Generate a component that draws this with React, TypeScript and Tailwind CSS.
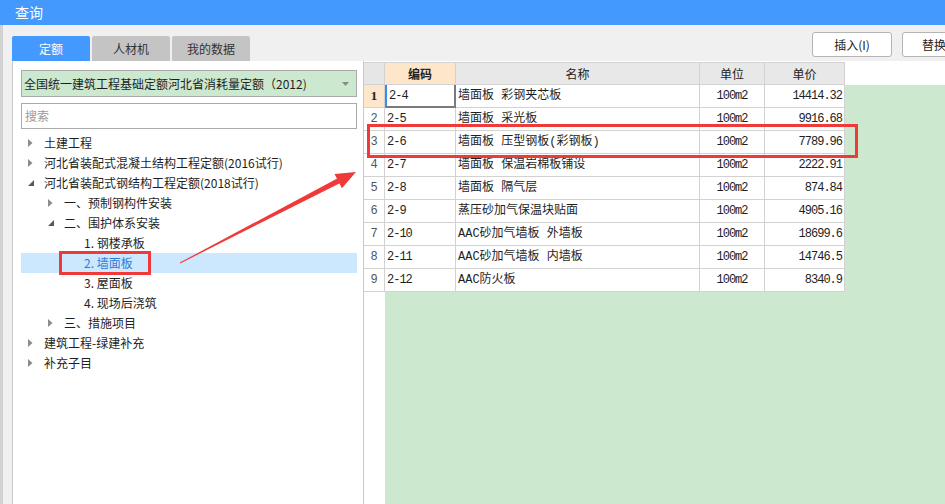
import React from 'react';

type TreeItem = { label: string; level: number; state?: 'open' | 'closed'; selected?: boolean };

const treeItems: TreeItem[] = [
  { label: '土建工程', level: 0, state: 'closed' },
  { label: '河北省装配式混凝土结构工程定额(2016试行)', level: 0, state: 'closed' },
  { label: '河北省装配式钢结构工程定额(2018试行)', level: 0, state: 'open' },
  { label: '一、预制钢构件安装', level: 1, state: 'closed' },
  { label: '二、围护体系安装', level: 1, state: 'open' },
  { label: '1. 钢楼承板', level: 2 },
  { label: '2. 墙面板', level: 2, selected: true },
  { label: '3. 屋面板', level: 2 },
  { label: '4. 现场后浇筑', level: 2 },
  { label: '三、措施项目', level: 1, state: 'closed' },
  { label: '建筑工程-绿建补充', level: 0, state: 'closed' },
  { label: '补充子目', level: 0, state: 'closed' },
];

const rows = [
  ['2-4', '墙面板 彩钢夹芯板', '14414.32'],
  ['2-5', '墙面板 采光板', '9916.68'],
  ['2-6', '墙面板 压型钢板(彩钢板)', '7789.96'],
  ['2-7', '墙面板 保温岩棉板铺设', '2222.91'],
  ['2-8', '墙面板 隔气层', '874.84'],
  ['2-9', '蒸压砂加气保温块贴面', '4905.16'],
  ['2-10', 'AAC砂加气墙板 外墙板', '18699.6'],
  ['2-11', 'AAC砂加气墙板 内墙板', '14746.5'],
  ['2-12', 'AAC防火板', '8340.9'],
];

// indentation per tree level
const levelPad = ['pl-[7px]', 'pl-[27px]', 'pl-[47px]'];

const Toggle = ({ state }: { state?: 'open' | 'closed' }) => {
  if (state === 'closed') {
    return (
      <svg width="5" height="8" viewBox="0 0 5 8">
        <path d="M0 0 L4.5 4 L0 8 Z" fill="#8c8c8c" />
      </svg>
    );
  }
  if (state === 'open') {
    return (
      <svg width="6" height="6" viewBox="0 0 6 6">
        <path d="M6 0 L6 6 L0 6 Z" fill="#595959" />
      </svg>
    );
  }
  return null;
};

const App = () => {
  return (
    <div className="relative w-[945px] h-[504px] overflow-hidden flex flex-col bg-[#f0f0f0] font-['Noto_Sans_CJK_SC',sans-serif] text-[#1e1e1e]">
      {/* title bar */}
      <div className="h-[25px] shrink-0 bg-[#4499ff] text-white text-[14px] pl-[15px] flex items-center">查询</div>

      <div className="flex flex-1 min-h-0">
        <div className="w-[3px] shrink-0 bg-[#d2d2d2]" />
        <div className="flex-1 flex flex-col pl-[9px] min-w-0">
          {/* tabs + buttons */}
          <div className="h-[36px] shrink-0 flex">
            <div className="flex items-end gap-[2px] text-[12px]">
              <div className="w-[78px] h-[25px] rounded-t-[2px] bg-[#4499ff] text-white flex items-center justify-center">定额</div>
              <div className="w-[78px] h-[25px] rounded-t-[2px] bg-[#c4c4c4] text-[#333] flex items-center justify-center">人材机</div>
              <div className="w-[78px] h-[25px] rounded-t-[2px] bg-[#c4c4c4] text-[#333] flex items-center justify-center">我的数据</div>
            </div>
            <div className="ml-auto mr-[-21px] mt-[7px] flex gap-[10px] text-[12px]">
              <button className="w-[80px] h-[25px] bg-white border border-[#b4b4b4] rounded-[3px] text-[#222]">插入(I)</button>
              <button className="w-[64px] h-[25px] bg-white border border-[#b4b4b4] rounded-[3px] text-[#222]">替换</button>
            </div>
          </div>

          <div className="flex flex-1 min-h-0">
            {/* left panel */}
            <div className="w-[352px] shrink-0 bg-white border-l border-r border-[#c9c9c9] pl-[8px] pr-[6px] pt-[9px] text-[12px]">
              <div className="h-[27px] bg-[#cce8cf] border border-[#aaaaaa] flex items-center pl-[2px] pr-[7px]">
                <span className="flex-1">全国统一建筑工程基础定额河北省消耗量定额（2012)</span>
                <svg width="7" height="4" viewBox="0 0 7 4">
                  <path d="M0 0 L7 0 L3.5 4 Z" fill="#8a8a8a" />
                </svg>
              </div>
              <div className="mt-[6px] h-[26px] border border-[#ababab] flex items-center pl-[3px] text-[#9a9a9a]">搜索</div>
              <div className="mt-[4px]">
                {treeItems.map((item) => (
                  <div
                    key={item.label}
                    className={`h-[20px] flex items-center ${levelPad[item.level]} ${item.selected ? 'bg-[#cce8ff] text-[#2f7bd8]' : ''}`}
                  >
                    <span className="w-[16px] flex items-center">
                      <Toggle state={item.state} />
                    </span>
                    <span className="whitespace-nowrap">{item.label}</span>
                  </div>
                ))}
              </div>
            </div>

            {/* table */}
            <div className="flex-1 flex flex-col bg-white pt-[1px] min-w-0 font-['Liberation_Mono','Noto_Sans_CJK_SC',monospace] text-[12px]">
              <div className="h-[23px] shrink-0 flex font-['Noto_Sans_CJK_SC',sans-serif] text-[#222]">
                <div className="w-[21px] bg-[#e6e6e6] border-r border-b border-t border-[#d2d2d2]" />
                <div className="w-[71px] bg-[#fde6c9] border-r border-b border-t border-[#d2d2d2] flex items-center justify-center font-bold">编码</div>
                <div className="w-[244px] bg-[#e8e8e8] border-r border-b border-t border-[#d2d2d2] flex items-center justify-center">名称</div>
                <div className="w-[65px] bg-[#e8e8e8] border-r border-b border-t border-[#d2d2d2] flex items-center justify-center">单位</div>
                <div className="w-[80px] bg-[#e8e8e8] border-r border-b border-t border-[#d2d2d2] flex items-center justify-center">单价</div>
              </div>
              <div className="flex flex-1 min-h-0">
                <div className="w-[21px] shrink-0 bg-white">
                  {rows.map((r, i) => (
                    <div
                      key={r[0]}
                      className={`h-[23px] border-r border-b border-[#d2d2d2] flex items-center justify-center ${i === 0 ? "bg-[#fde6c9] font-bold font-['Liberation_Serif',serif] text-[13px] text-[#222]" : 'text-[#555]'}`}
                    >
                      {i + 1}
                    </div>
                  ))}
                </div>
                <div className="flex-1 bg-[#cce8cf]">
                  {rows.map((r, i) => (
                    <div key={r[0]} className="h-[23px] flex">
                      <div
                        className={`w-[71px] bg-white flex items-center pl-[2px] tracking-[-1px] ${i === 0 ? 'border-l-2 border-l-[#3c8ce6] border-r-2 border-r-[#7a7a7a] border-b-2 border-b-[#7a7a7a]' : 'border-r border-b border-[#d2d2d2]'}`}
                      >
                        {r[0]}
                      </div>
                      <div className="w-[244px] bg-white border-r border-b border-[#d2d2d2] flex items-center pl-[2px] whitespace-nowrap">{r[1]}</div>
                      <div className="w-[65px] bg-white border-r border-b border-[#d2d2d2] flex items-center justify-center tracking-[-1px]">100m2</div>
                      <div className="w-[80px] bg-white border-r border-b border-[#d2d2d2] flex items-center justify-end pr-[2px] tracking-[-1px]">{r[2]}</div>
                    </div>
                  ))}
                </div>
              </div>
            </div>
          </div>
        </div>
      </div>

      {/* annotations */}
      <div className="absolute left-[59px] top-[251px] w-[92px] h-[24px] border-[3px] border-[#f03a3a]" />
      <div className="absolute left-[367px] top-[124px] w-[491px] h-[34px] border-[3px] border-[#f03a3a]" />
      <svg className="absolute left-0 top-0 pointer-events-none" width="945" height="504" viewBox="0 0 945 504">
        <polygon points="179.8,262.6 180.2,263.4 339.8,183.2 337.2,178.4" fill="#f03a3a" />
        <polygon points="356,172 334.5,174.1 341.9,188.3" fill="#f03a3a" />
      </svg>
    </div>
  );
};

export default App;
